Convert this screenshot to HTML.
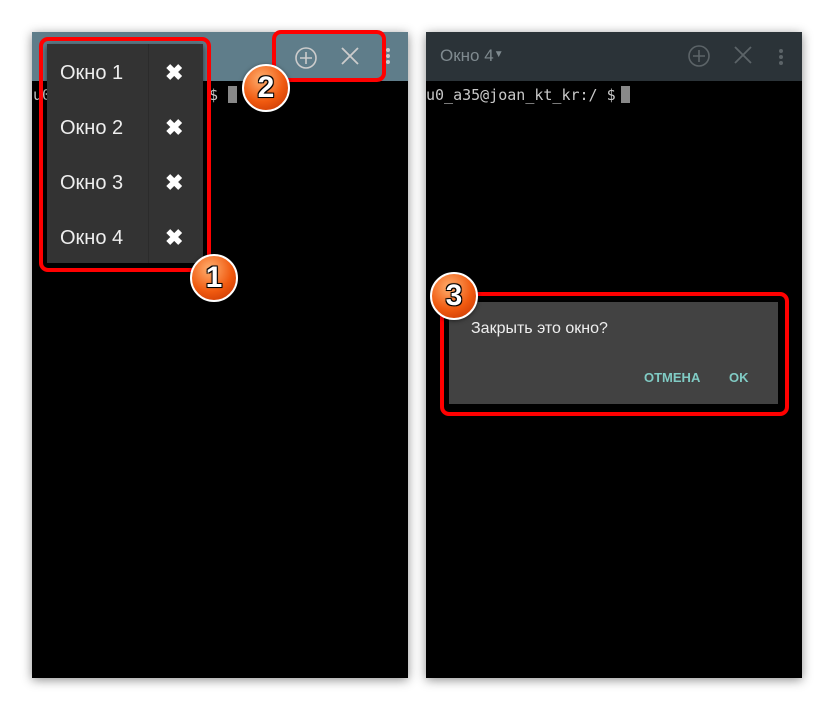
<!DOCTYPE html><html><head><meta charset="utf-8"><style>
body{margin:0;width:834px;height:710px;background:#fff;position:relative;overflow:hidden;font-family:"Liberation Sans",sans-serif}
.a{position:absolute}
.panel{background:#000;box-shadow:0 2px 10px rgba(0,0,0,.45)}
.mono{font-family:"DejaVu Sans Mono","Liberation Mono",monospace;color:#c8c8c8;font-size:15px}
.red{border:4px solid #f00;border-radius:9px;box-sizing:border-box}
.badge{width:44px;height:44px;border-radius:50%;background:radial-gradient(circle at 40% 30%,#ffb070,#f05a10 55%,#c03000);border:2px solid #fff;box-shadow:0 1px 4px rgba(0,0,0,.5);color:#fff;font-weight:bold;font-size:30px;text-align:center;line-height:44px;text-shadow:0 0 2px #000,1px 1px 0 #000,-1px -1px 0 #000,1px -1px 0 #000,-1px 1px 0 #000}
.row{position:absolute;left:0;width:156px;height:55px;color:#eee;font-size:20px}
.row span{position:absolute;left:13px;top:16px}
.row b{position:absolute;left:118px;top:14px;font-size:22px;color:#fff}
</style></head><body>
<div class="a panel" style="left:32px;top:32px;width:376px;height:646px"></div>
<div class="a" style="left:32px;top:32px;width:376px;height:49px;background:#5f7d8a"></div>
<div class="a mono" style="left:33px;top:86px">u0</div>
<div class="a mono" style="left:209px;top:86px">$</div>
<div class="a" style="left:228px;top:86px;width:9px;height:17px;background:#888"></div>
<svg class="a" style="left:292px;top:44px" width="28" height="28"><circle cx="14" cy="14" r="10" fill="none" stroke="#ccc" stroke-width="1.6"/><path d="M14 8v12M8 14h12" stroke="#ccc" stroke-width="1.6"/></svg>
<svg class="a" style="left:338px;top:44px" width="24" height="24"><path d="M4 4L20 20M20 4L4 20" stroke="#ccc" stroke-width="1.8"/></svg>
<div class="a" style="left:386px;top:48px;width:4px;height:4px;background:#ccc;border-radius:2px;box-shadow:0 6px 0 #ccc,0 12px 0 #ccc"></div>
<div class="a" style="left:47px;top:44px;width:156px;height:219px;background:#333;box-shadow:0 2px 6px rgba(0,0,0,.6)">
<div class="a" style="left:101px;top:0;width:1px;height:219px;background:#2b2b2b"></div>
<div class="row" style="top:2px"><span>Окно 1</span><b>✖</b></div>
<div class="row" style="top:57px"><span>Окно 2</span><b>✖</b></div>
<div class="row" style="top:112px"><span>Окно 3</span><b>✖</b></div>
<div class="row" style="top:167px"><span>Окно 4</span><b>✖</b></div>
</div>
<div class="a red" style="left:39px;top:37px;width:172px;height:235px"></div>
<div class="a red" style="left:272px;top:30px;width:114px;height:52px"></div>
<div class="a badge" style="left:242px;top:64px">2</div>
<div class="a badge" style="left:190px;top:254px">1</div>

<div class="a panel" style="left:426px;top:32px;width:376px;height:646px"></div>
<div class="a" style="left:426px;top:32px;width:376px;height:49px;background:#2b3338"></div>
<div class="a" style="left:440px;top:46px;color:#7f8a8f;font-size:17px">Окно 4<span style="font-size:10px;vertical-align:4px">▼</span></div>
<svg class="a" style="left:685px;top:42px" width="28" height="28"><circle cx="14" cy="14" r="10" fill="none" stroke="#5c6468" stroke-width="1.6"/><path d="M14 8v12M8 14h12" stroke="#5c6468" stroke-width="1.6"/></svg>
<svg class="a" style="left:731px;top:43px" width="24" height="24"><path d="M4 4L20 20M20 4L4 20" stroke="#5c6468" stroke-width="1.8"/></svg>
<div class="a" style="left:779px;top:49px;width:4px;height:4px;background:#5c6468;border-radius:2px;box-shadow:0 6px 0 #5c6468,0 12px 0 #5c6468"></div>
<div class="a mono" style="left:426px;top:86px">u0_a35@joan_kt_kr:/ $</div>
<div class="a" style="left:621px;top:86px;width:9px;height:17px;background:#888"></div>
<div class="a" style="left:449px;top:302px;width:329px;height:102px;background:#424242;box-shadow:0 2px 6px rgba(0,0,0,.6)"></div>
<div class="a" style="left:471px;top:320px;color:#eee;font-size:16px">Закрыть это окно?</div>
<div class="a" style="left:644px;top:370px;color:#80cbc4;font-size:13px;font-weight:bold">ОТМЕНА</div>
<div class="a" style="left:729px;top:370px;color:#80cbc4;font-size:13px;font-weight:bold">OK</div>
<div class="a red" style="left:440px;top:292px;width:349px;height:124px"></div>
<div class="a badge" style="left:430px;top:272px">3</div>
</body></html>
